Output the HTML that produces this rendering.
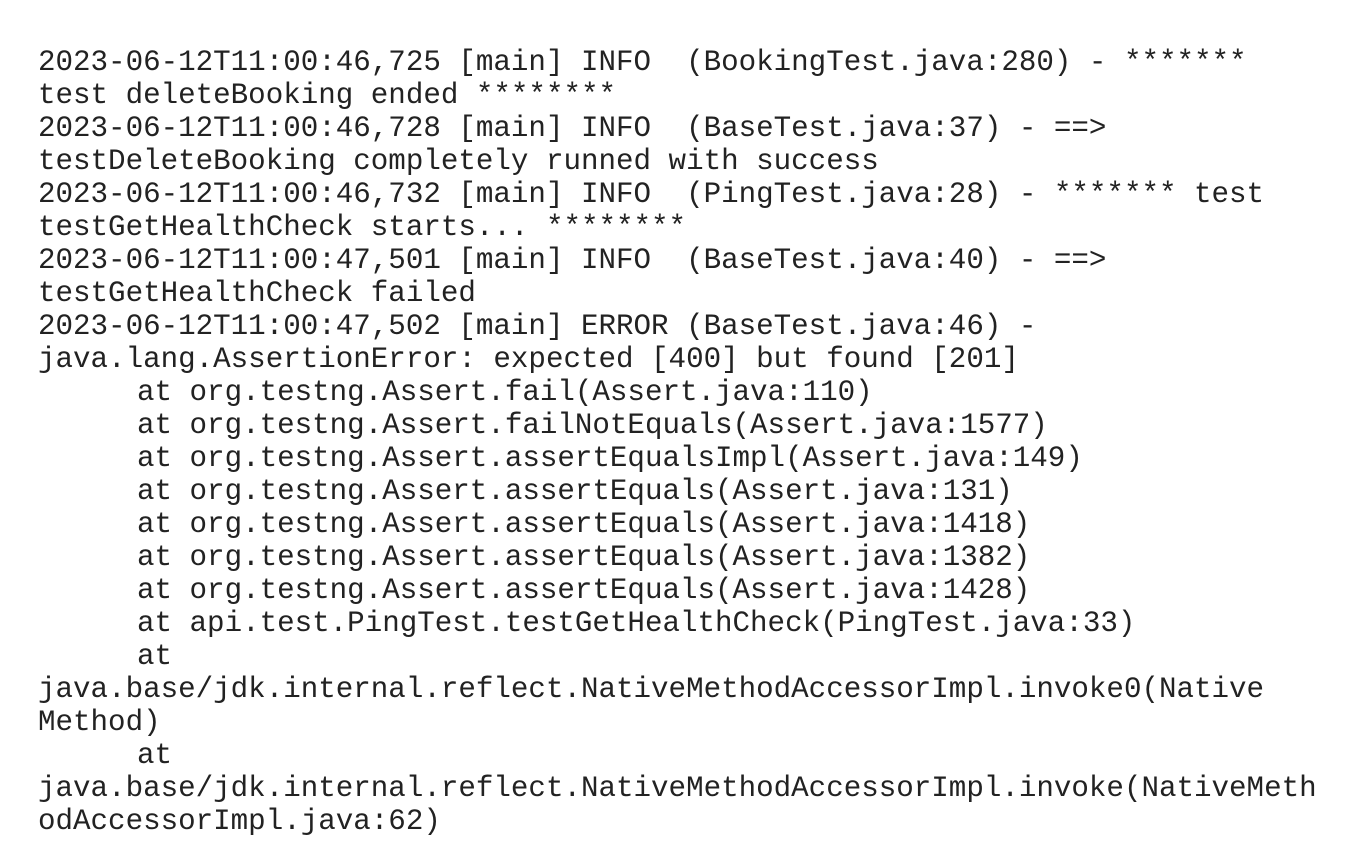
<!DOCTYPE html>
<html><head><meta charset="utf-8"><style>
html,body{margin:0;padding:0;background:#fff;width:1357px;height:842px;overflow:hidden}
pre{position:absolute;left:38px;top:46px;margin:0;font-family:"Liberation Mono",monospace;font-size:29.2px;line-height:33px;color:#222;white-space:pre}
.t{display:inline-block;width:99px}
</style></head><body><pre>2023-06-12T11:00:46,725 [main] INFO  (BookingTest.java:280) - *******
test deleteBooking ended ********
2023-06-12T11:00:46,728 [main] INFO  (BaseTest.java:37) - ==>
testDeleteBooking completely runned with success
2023-06-12T11:00:46,732 [main] INFO  (PingTest.java:28) - ******* test
testGetHealthCheck starts... ********
2023-06-12T11:00:47,501 [main] INFO  (BaseTest.java:40) - ==>
testGetHealthCheck failed
2023-06-12T11:00:47,502 [main] ERROR (BaseTest.java:46) -
java.lang.AssertionError: expected [400] but found [201]
<span class="t"></span>at org.testng.Assert.fail(Assert.java:110)
<span class="t"></span>at org.testng.Assert.failNotEquals(Assert.java:1577)
<span class="t"></span>at org.testng.Assert.assertEqualsImpl(Assert.java:149)
<span class="t"></span>at org.testng.Assert.assertEquals(Assert.java:131)
<span class="t"></span>at org.testng.Assert.assertEquals(Assert.java:1418)
<span class="t"></span>at org.testng.Assert.assertEquals(Assert.java:1382)
<span class="t"></span>at org.testng.Assert.assertEquals(Assert.java:1428)
<span class="t"></span>at api.test.PingTest.testGetHealthCheck(PingTest.java:33)
<span class="t"></span>at
java.base/jdk.internal.reflect.NativeMethodAccessorImpl.invoke0(Native
Method)
<span class="t"></span>at
java.base/jdk.internal.reflect.NativeMethodAccessorImpl.invoke(NativeMeth
odAccessorImpl.java:62)</pre></body></html>
